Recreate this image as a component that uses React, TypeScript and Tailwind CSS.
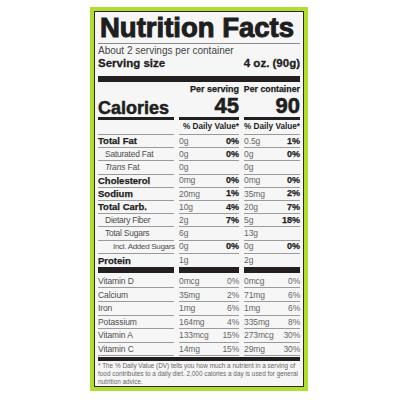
import React from "react";

type Row = {
  name: string;
  bold?: boolean;
  indent?: number;
  italic?: boolean;
  a1: string;
  p1?: string;
  a2: string;
  p2?: string;
};

const upper: Row[] = [
  { name: "Total Fat", bold: true, a1: "0g", p1: "0%", a2: "0.5g", p2: "1%" },
  { name: "Saturated Fat", indent: 1, a1: "0g", p1: "0%", a2: "0g", p2: "0%" },
  { name: "Trans Fat", indent: 1, italic: true, a1: "0g", a2: "0g" },
  { name: "Cholesterol", bold: true, a1: "0mg", p1: "0%", a2: "0mg", p2: "0%" },
  { name: "Sodium", bold: true, a1: "20mg", p1: "1%", a2: "35mg", p2: "2%" },
  { name: "Total Carb.", bold: true, a1: "10g", p1: "4%", a2: "20g", p2: "7%" },
  { name: "Dietary Fiber", indent: 1, a1: "2g", p1: "7%", a2: "5g", p2: "18%" },
  { name: "Total Sugars", indent: 1, a1: "6g", a2: "13g" },
  { name: "Incl. Added Sugars", indent: 2, a1: "0g", p1: "0%", a2: "0g", p2: "0%" },
];

const lower: Row[] = [
  { name: "Vitamin D", a1: "0mcg", p1: "0%", a2: "0mcg", p2: "0%" },
  { name: "Calcium", a1: "35mg", p1: "2%", a2: "71mg", p2: "6%" },
  { name: "Iron", a1: "1mg", p1: "6%", a2: "1mg", p2: "6%" },
  { name: "Potassium", a1: "164mg", p1: "4%", a2: "335mg", p2: "8%" },
  { name: "Vitamin A", a1: "133mcg", p1: "15%", a2: "273mcg", p2: "30%" },
  { name: "Vitamin C", a1: "14mg", p1: "15%", a2: "29mg", p2: "30%" },
];

function NameCell({ r }: { r: Row }) {
  if (r.bold) {
    return (
      <div className="flex items-center border-b border-[#9a9a9a] text-[9.5px] font-bold text-[#1e1e1e] leading-none [-webkit-text-stroke:0.25px_#1e1e1e]">
        {r.name}
      </div>
    );
  }
  if (r.italic) {
    return (
      <div className="flex items-center border-b border-[#9a9a9a] pl-[7px] text-[8.5px] tracking-[-0.15px] text-[#4d4d4d] leading-none">
        <span className="italic">Trans</span>&nbsp;Fat
      </div>
    );
  }
  if (r.indent === 2) {
    return (
      <div className="flex items-center border-b border-[#9a9a9a] pl-[15px] text-[8px] tracking-[-0.3px] text-[#4d4d4d] leading-none whitespace-nowrap">
        {r.name}
      </div>
    );
  }
  return (
    <div className="flex items-center border-b border-[#9a9a9a] pl-[7px] text-[8.5px] tracking-[-0.25px] text-[#4d4d4d] leading-none whitespace-nowrap">
      {r.name}
    </div>
  );
}

function ValCell({ a, p, boldPct }: { a: string; p?: string; boldPct: boolean }) {
  return (
    <div className="flex items-center justify-between border-b border-[#9a9a9a] leading-none">
      <span className="text-[8.5px] tracking-[-0.1px] text-[#666]">{a}</span>
      {p ? (
        boldPct ? (
          <span className="text-[9px] font-bold text-[#1e1e1e] [-webkit-text-stroke:0.25px_#1e1e1e]">{p}</span>
        ) : (
          <span className="text-[8.5px] tracking-[-0.2px] text-[#666]">{p}</span>
        )
      ) : null}
    </div>
  );
}

export default function App() {
  return (
    <div className="w-[400px] h-[400px] bg-white pt-[7px] pl-[90px] font-['Liberation_Sans',Arial,sans-serif]">
      <div className="w-[218px] h-[384px] border-[4px] border-[#b0de2c] box-border">
        <div className="h-full border border-[#2a2a2a] bg-[#f6f6f6] px-[3px] box-border">
          <div className="h-[32px] border-b border-[#8a8a8a] text-[27.5px] leading-[31px] font-bold text-[#1e1e1e] whitespace-nowrap pl-[2px] [-webkit-text-stroke:1px_#1e1e1e]">
            Nutrition Facts
          </div>
          <div className="h-[13px] text-[10px] leading-[13px] text-[#444]">About 2 servings per container</div>
          <div className="h-[14px] flex justify-between items-center text-[11.5px] font-bold text-[#1e1e1e] leading-none [-webkit-text-stroke:0.3px_#1e1e1e]">
            <span>Serving size</span>
            <span>4 oz. (90g)</span>
          </div>
          <div className="mt-[5px] h-[6px] bg-[#231f20]" />
          <div className="grid grid-cols-[76px_60px_56px] gap-x-[5px]">
            <div className="h-[14px]" />
            <div className="h-[14px] pt-[1px] flex justify-end whitespace-nowrap text-[9px] font-bold text-[#1e1e1e] leading-[13px] [-webkit-text-stroke:0.25px_#1e1e1e]">Per serving</div>
            <div className="h-[14px] pt-[1px] flex justify-end whitespace-nowrap text-[8.8px] font-bold text-[#1e1e1e] leading-[13px] [-webkit-text-stroke:0.25px_#1e1e1e]">Per container</div>

            <div className="h-[24px] border-b-[3px] border-[#231f20] flex items-end text-[18px] font-bold text-[#1e1e1e] leading-[18px] [-webkit-text-stroke:0.5px_#1e1e1e]">
              Calories
            </div>
            <div className="h-[24px] border-b-[3px] border-[#231f20] flex items-end justify-end text-[22px] font-bold text-[#1e1e1e] leading-[22px] [-webkit-text-stroke:0.6px_#1e1e1e]">
              45
            </div>
            <div className="h-[24px] border-b-[3px] border-[#231f20] flex items-end justify-end text-[22px] font-bold text-[#1e1e1e] leading-[22px] [-webkit-text-stroke:0.6px_#1e1e1e]">
              90
            </div>

            <div className="h-[15px] border-b border-[#9a9a9a]" />
            <div className="h-[15px] border-b border-[#9a9a9a] flex items-center justify-end whitespace-nowrap text-[8.2px] font-bold text-[#1e1e1e] leading-none">
              % Daily Value*
            </div>
            <div className="h-[15px] border-b border-[#9a9a9a] flex items-center justify-end whitespace-nowrap text-[8.2px] font-bold text-[#1e1e1e] leading-none">
              % Daily Value*
            </div>
          </div>

          {upper.map((r) => (
            <div key={r.name} className="grid grid-cols-[76px_60px_56px] gap-x-[5px] h-[13.2px]">
              <NameCell r={r} />
              <ValCell a={r.a1} p={r.p1} boldPct />
              <ValCell a={r.a2} p={r.p2} boldPct />
            </div>
          ))}
          <div className="grid grid-cols-[76px_60px_56px] gap-x-[5px] h-[13.2px]">
            <div className="flex items-center text-[9.5px] font-bold text-[#1e1e1e] leading-none [-webkit-text-stroke:0.25px_#1e1e1e]">Protein</div>
            <div className="flex items-center text-[8.5px] tracking-[-0.1px] text-[#666] leading-none">1g</div>
            <div className="flex items-center text-[8.5px] tracking-[-0.1px] text-[#666] leading-none">2g</div>
          </div>
          <div className="grid grid-cols-[76px_60px_56px] gap-x-[5px] h-[6px]">
            <div className="bg-[#231f20]" />
            <div className="bg-[#231f20]" />
            <div className="bg-[#231f20]" />
          </div>

          <div className="mt-[2px]">
            {lower.map((r) => (
              <div key={r.name} className="grid grid-cols-[76px_60px_56px] gap-x-[5px] h-[13.6px]">
                <div className="flex items-center border-b border-[#9a9a9a] text-[8.5px] tracking-[-0.1px] text-[#4d4d4d] leading-none">
                  {r.name}
                </div>
                <ValCell a={r.a1} p={r.p1} boldPct={false} />
                <ValCell a={r.a2} p={r.p2} boldPct={false} />
              </div>
            ))}
          </div>
          <div className="mt-[1px] h-[4px] bg-[#231f20]" />
          <div className="pt-[1px] text-[6.4px] leading-[7.6px] text-[#666] whitespace-nowrap">
            * The % Daily Value (DV) tells you how much a nutrient in a serving of
            <br />
            food contributes to a daily diet. 2,000 calories a day is used for general
            <br />
            nutrition advice.
          </div>
        </div>
      </div>
    </div>
  );
}
